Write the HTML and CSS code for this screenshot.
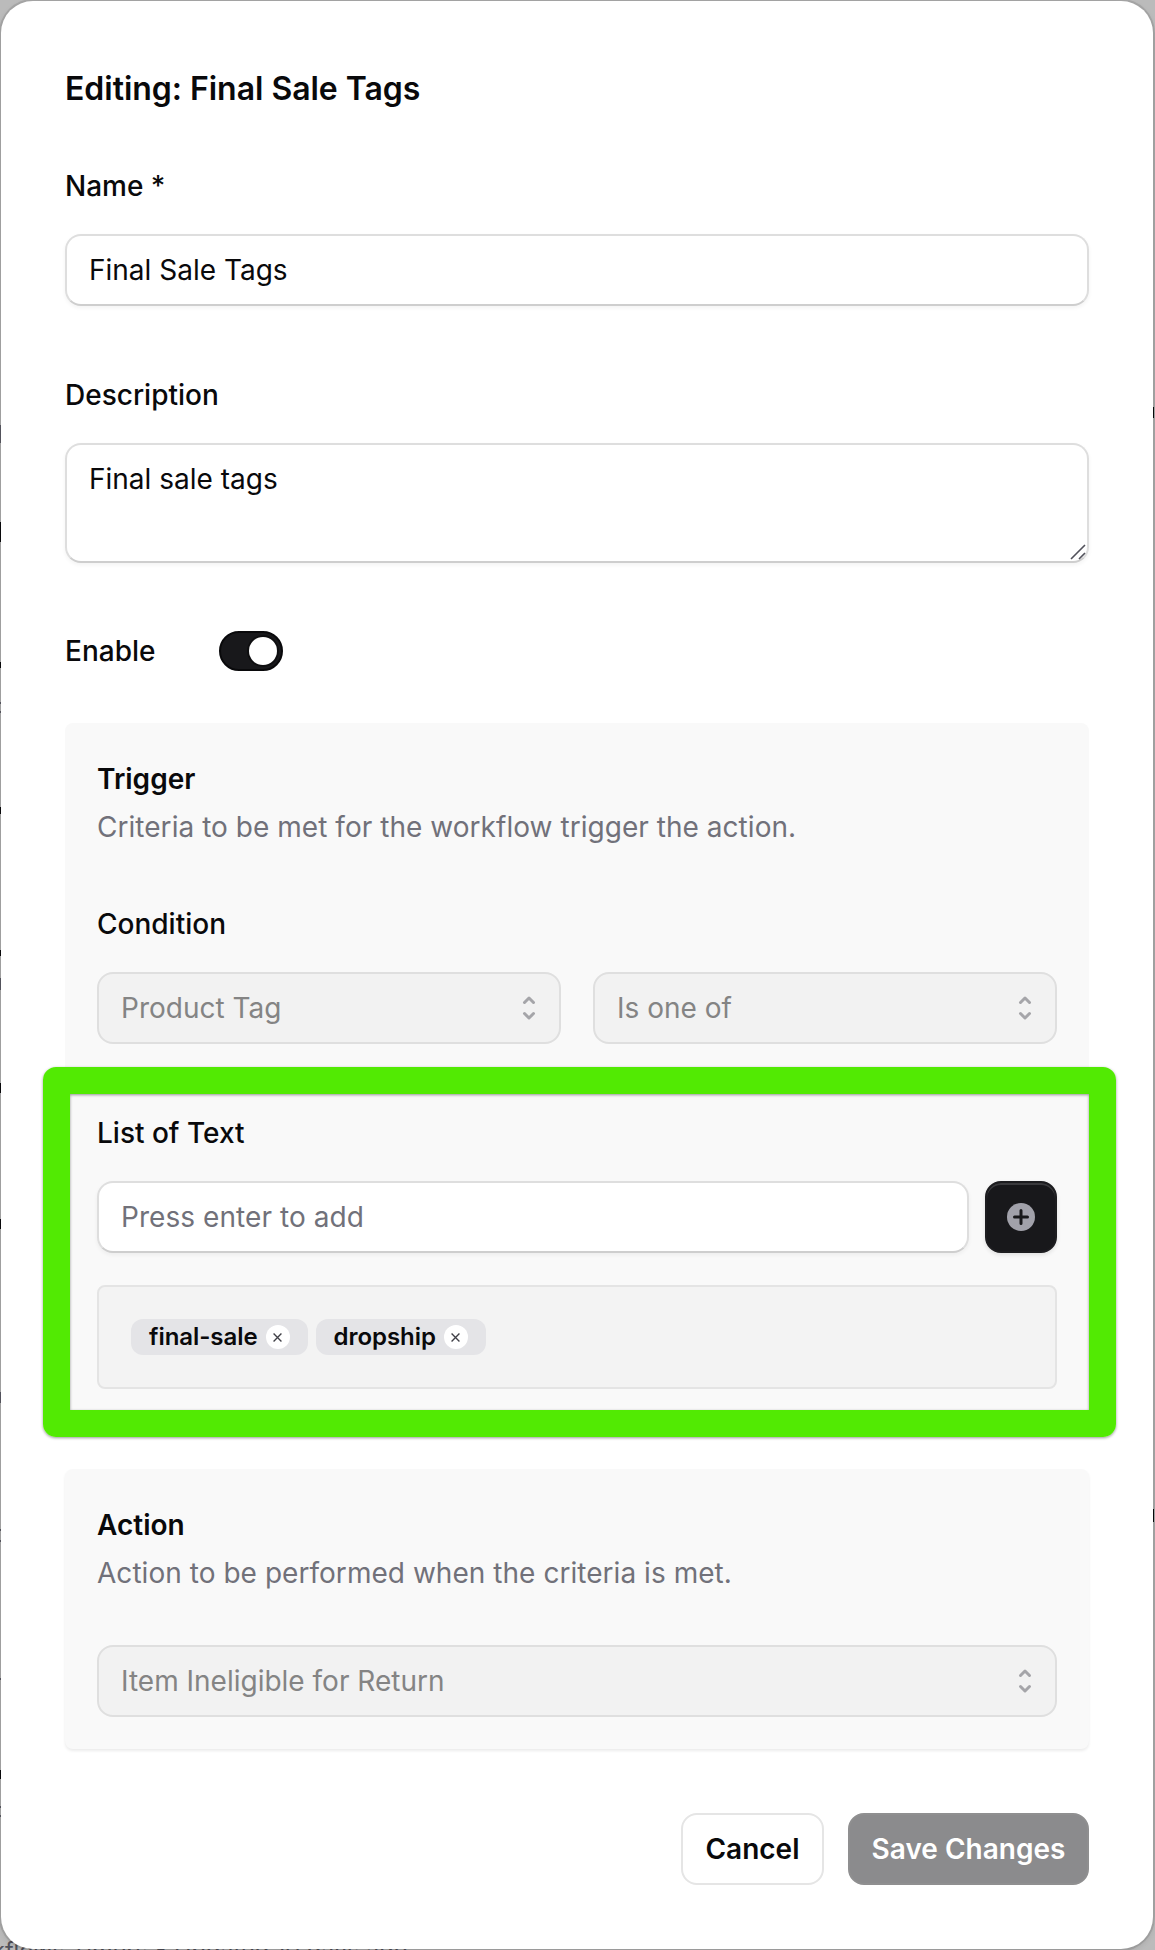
FILE: index.html
```html
<!DOCTYPE html>
<html lang="en">

<head>
    <meta charset="UTF-8" />
    <meta name="viewport" content="width=device-width, initial-scale=1.0" />
    <title>Editing: Final Sale Tags</title>
    <link rel="stylesheet" href="styles.css">
</head>

<body>
    <!-- page behind the dialog, only slivers of it show -->
    <div class="backdrop">
        <i class="sliver dim" style="top: 425px; height: 18px"></i>
        <i class="sliver" style="top: 522px; height: 20px"></i>
        <i class="sliver" style="top: 662px; height: 6px"></i>
        <i class="sliver dim" style="top: 702px; height: 2px"></i>
        <i class="sliver dim" style="top: 711px; height: 2px"></i>
        <i class="sliver" style="top: 807px; height: 7px"></i>
        <i class="sliver" style="top: 950px; height: 6px"></i>
        <i class="sliver dim" style="top: 978px; height: 12px"></i>
        <i class="sliver" style="top: 1083px; height: 10px"></i>
        <i class="sliver" style="top: 1219px; height: 10px"></i>
        <i class="sliver dim" style="top: 1392px; height: 11px"></i>
        <i class="sliver dim" style="top: 1529px; height: 2px"></i>
        <i class="sliver dim" style="top: 1540px; height: 2px"></i>
        <i class="sliver dim" style="top: 1678px; height: 2px"></i>
        <i class="sliver" style="top: 1770px; height: 9px"></i>
        <i class="sliver dim" style="top: 1806px; height: 2px"></i>
        <i class="sliver dim" style="top: 1815px; height: 2px"></i>
        <i class="sliver right" style="top: 407px; height: 11px"></i>
        <i class="sliver right" style="top: 1509px; height: 13px"></i>
        <p class="backdrop-text">kflows Timers • Updated 10 days ago</p>
    </div>

    <form class="dialog">
        <h1 class="dialog-title">Editing: Final Sale Tags</h1>

        <div class="field name-field">
            <label for="name">Name *</label>
            <input id="name" class="control" type="text" value="Final Sale Tags" />
        </div>

        <div class="field description-field">
            <label for="description">Description</label>
            <div class="textarea-wrap">
                <textarea id="description" class="control">Final sale tags</textarea>
                <svg class="grip" viewBox="0 0 16 16"><path d="M1 15 15 1M9 15l6-6" /></svg>
            </div>
        </div>

        <div class="enable-row">
            <label>Enable</label>
            <span class="switch" role="switch" aria-checked="true"><span class="thumb"></span></span>
        </div>

        <section class="panel trigger">
            <h2>Trigger</h2>
            <p class="hint">Criteria to be met for the workflow trigger the action.</p>

            <div class="field condition-field">
                <label>Condition</label>
                <div class="select-row">
                    <div class="select">Product Tag
                        <svg viewBox="0 0 16 16"><path d="M5.75 10.75 8 13l2.25-2.25M10.25 5.25 8 3 5.75 5.25" /></svg>
                    </div>
                    <div class="select">Is one of
                        <svg viewBox="0 0 16 16"><path d="M5.75 10.75 8 13l2.25-2.25M10.25 5.25 8 3 5.75 5.25" /></svg>
                    </div>
                </div>
            </div>

            <div class="field list-field">
                <label for="tag">List of Text</label>
                <div class="add-row">
                    <input id="tag" class="control" type="text" placeholder="Press enter to add" />
                    <button class="add-button" type="button" aria-label="Add">
                        <svg viewBox="0 0 16 16">
                            <circle cx="8" cy="8" r="7" />
                            <path d="M8 4.75v6.5M4.75 8h6.5" />
                        </svg>
                    </button>
                </div>
            </div>

            <div class="tags">
                <span class="tag">final-sale
                    <span class="remove"><svg viewBox="0 0 8 8"><path d="M.5.5l7 7M7.5.5l-7 7" /></svg></span>
                </span>
                <span class="tag">dropship
                    <span class="remove"><svg viewBox="0 0 8 8"><path d="M.5.5l7 7M7.5.5l-7 7" /></svg></span>
                </span>
            </div>

            <!-- green callout round the list -->
            <div class="callout"></div>
        </section>

        <section class="panel action">
            <h2>Action</h2>
            <p class="hint">Action to be performed when the criteria is met.</p>
            <div class="select">Item Ineligible for Return
                <svg viewBox="0 0 16 16"><path d="M5.75 10.75 8 13l2.25-2.25M10.25 5.25 8 3 5.75 5.25" /></svg>
            </div>
        </section>

        <div class="buttons">
            <button class="cancel" type="button">Cancel</button>
            <button class="save" type="button">Save Changes</button>
        </div>
    </form>
</body>

</html>
```
FILE: styles.css
```css
* {
    box-sizing: border-box;
}

body {
    margin: 0;
    height: 1950px;
    padding: 1px 2px 1px 1px;
    overflow: hidden;
    font-family: Inter, sans-serif;
    font-size: 28px;
    line-height: 40px;
    color: #09090b;
    background: #bbb;
}

h1,
h2,
p {
    margin: 0;
}

.backdrop {
    position: absolute;
    inset: 0;
    overflow: hidden;
}

.sliver {
    position: absolute;
    z-index: 1;
    left: 0;
    width: 1px;
    background: #09090b;
}

.sliver.dim {
    background: #52525b;
}

.sliver.right {
    left: auto;
    right: 1px;
}

.backdrop-text {
    position: absolute;
    left: -8px;
    top: 1931px;
    font-size: 23.5px;
    white-space: nowrap;
    color: #52525b;
}

.dialog {
    position: relative;
    display: flex;
    flex-direction: column;
    width: 1152px;
    height: 1948px;
    padding: 64px;
    border-radius: 32px;
    background: #fff;
    box-shadow: 0 0 0 2px rgba(0, 0, 0, 0.1), 0 2px 6px rgba(0, 0, 0, 0.12);
}

.dialog-title {
    font-size: 32px;
    line-height: 48px;
    font-weight: 600;
    letter-spacing: -0.03px;
}

.field {
    display: flex;
    flex-direction: column;
    gap: 28px;
}

label {
    font-weight: 500;
}

.control {
    display: block;
    width: 100%;
    height: 72px;
    margin: 0;
    padding: 14px 22px;
    border: 2px solid #dedede;
    border-bottom-color: #cecece;
    border-radius: 16px;
    outline: none;
    font: inherit;
    color: #09090b;
    background: #fff;
    box-shadow: 0 2px 4px rgba(0, 0, 0, 0.05);
}

.control::placeholder {
    color: #71717a;
    opacity: 1;
    letter-spacing: 0.06px;
}

.name-field {
    margin-top: 53px;
}

.description-field {
    margin-top: 69px;
}

.textarea-wrap {
    position: relative;
}

textarea.control {
    height: 120px;
    resize: none;
    overflow: hidden;
}

.grip {
    position: absolute;
    right: 3px;
    bottom: 3px;
    width: 16px;
    height: 16px;
    fill: none;
    stroke: #52525b;
    stroke-width: 1.6;
}

.enable-row {
    display: flex;
    align-items: center;
    margin-top: 68px;
}

.enable-row label {
    width: 154px;
}

.switch {
    display: flex;
    justify-content: flex-end;
    width: 64px;
    height: 40px;
    padding: 4px;
    border: 2px solid #09090b;
    border-radius: 20px;
    background: #18181b;
}

.thumb {
    width: 28px;
    height: 28px;
    border-radius: 50%;
    background: #fff;
    box-shadow: 0 0 0 2px rgba(0, 0, 0, 0.4);
}

.panel {
    position: relative;
    padding: 32px;
    border-radius: 8px;
    background: #f9f9f9;
    box-shadow: 0 2px 3px rgba(0, 0, 0, 0.08);
}

.trigger {
    height: 698px;
    margin-top: 52px;
    box-shadow: none;
}

.panel h2 {
    padding: 4px 0;
    font-size: 28px;
    line-height: 40px;
    font-weight: 600;
}

.hint {
    margin-top: 4px;
    letter-spacing: 0.04px;
    color: #71717a;
}

.condition-field {
    margin-top: 57px;
}

.select-row {
    display: grid;
    grid-template-columns: 1fr 1fr;
    gap: 32px;
}

.select {
    display: flex;
    align-items: center;
    justify-content: space-between;
    height: 72px;
    padding: 0 14px 0 22px;
    border: 2px solid #dfdfdf;
    border-radius: 16px;
    color: #848484;
    background: #f2f2f2;
}

.select svg {
    width: 32px;
    height: 32px;
    fill: none;
    stroke: #a5a5a9;
    stroke-width: 1.5;
    stroke-linecap: round;
    stroke-linejoin: round;
}

.list-field {
    margin-top: 69px;
}

.add-row {
    display: flex;
    gap: 16px;
}

.add-button {
    display: flex;
    flex: none;
    align-items: center;
    justify-content: center;
    width: 72px;
    height: 72px;
    padding: 0;
    border: 2px solid #1d1d20;
    border-radius: 16px;
    background: #18181b;
    box-shadow: inset 0 2px #3a3a3d, 0 2px 4px rgba(0, 0, 0, 0.1);
}

.add-button svg {
    width: 32px;
    height: 32px;
    fill: #a1a1aa;
}

.add-button path {
    fill: none;
    stroke: #18181b;
    stroke-width: 1.5;
    stroke-linecap: round;
}

.tags {
    display: flex;
    align-items: center;
    gap: 8px;
    height: 104px;
    margin-top: 32px;
    padding: 0 32px;
    border: 2px solid #e4e4e4;
    border-radius: 8px;
    background: #f3f3f3;
}

.tag {
    display: flex;
    align-items: center;
    gap: 8px;
    height: 36px;
    padding: 0 18px;
    border-radius: 12px;
    font-size: 24px;
    font-weight: 600;
    letter-spacing: -0.05px;
    background: #e4e4e7;
}

.remove {
    display: flex;
    align-items: center;
    justify-content: center;
    width: 24px;
    height: 24px;
    border-radius: 50%;
    background: #fff;
}

.remove svg {
    width: 9px;
    height: 9px;
    fill: none;
    stroke: #3f3f46;
    stroke-width: 1.2;
}

.callout {
    position: absolute;
    left: -22px;
    right: -27px;
    top: 344px;
    height: 370px;
    border: 27px solid #52ea03;
    border-radius: 13px;
    box-shadow: 0 1px 3px rgba(0, 0, 0, 0.4), inset 0 1px 3px rgba(0, 0, 0, 0.4);
    pointer-events: none;
}

.action {
    height: 280px;
    margin-top: 48px;
}

.action .select {
    margin-top: 52px;
}

.buttons {
    display: flex;
    justify-content: flex-end;
    gap: 24px;
    margin-top: 64px;
}

.buttons button {
    width: 143px;
    height: 72px;
    padding: 0;
    border: 2px solid #e5e5e5;
    border-radius: 16px;
    font: inherit;
    font-weight: 600;
    color: #09090b;
    background: #fff;
}

.buttons .save {
    width: 241px;
    border-color: #8f8f90;
    color: #fff;
    background: #8b8b8d;
}
```
